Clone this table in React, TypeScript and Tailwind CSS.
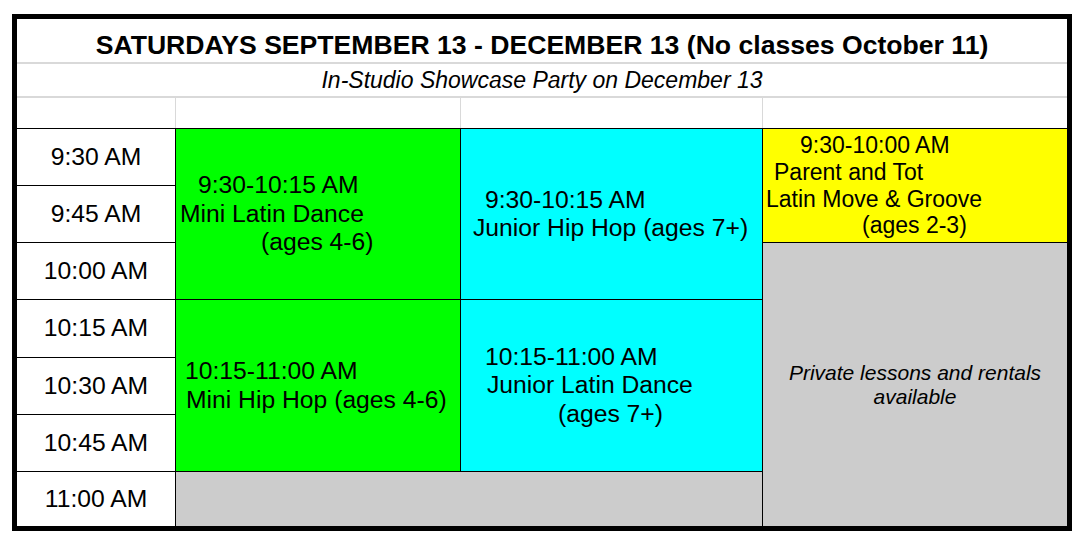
import React from 'react'

type Line = { text: string; indent: string }

const times = [
  { label: '9:30 AM', row: 'row-start-2' },
  { label: '9:45 AM', row: 'row-start-3' },
  { label: '10:00 AM', row: 'row-start-4' },
  { label: '10:15 AM', row: 'row-start-5' },
  { label: '10:30 AM', row: 'row-start-6' },
  { label: '10:45 AM', row: 'row-start-7' },
  { label: '11:00 AM', row: 'row-start-8' },
]

// spreadsheet-style cells: each line keeps its own indent
const ClassCell = ({ lines, className }: { lines: Line[]; className: string }) => (
  <div className={`flex flex-col justify-center border-t border-l border-black ${className}`}>
    {lines.map((line, idx) => (
      <div key={idx} className={`whitespace-pre ${line.indent}`}>
        {line.text}
      </div>
    ))}
  </div>
)

const App = () => {
  return (
    <div className="w-[1086px] h-[546px] bg-white pt-[14px] pl-[12px] text-black font-['Liberation_Sans',Arial,sans-serif]">
      <div className="w-[1060px] border-[5px] border-black bg-white">
        <div className="h-[45px] pt-[11px] border-b-2 border-[#d9d9d9] text-center font-bold text-[26.6px] leading-[30px]">
          SATURDAYS SEPTEMBER 13 - DECEMBER 13 (No classes October 11)
        </div>
        <div className="h-[34px] pt-[3px] border-b-2 border-[#d9d9d9] text-center italic text-[23px] leading-[26px]">
          In-Studio Showcase Party on December 13
        </div>

        <div className="grid grid-cols-[158px_285px_302px_305px] grid-rows-[30px_57px_57px_57px_58px_57px_57px_55px] text-[24.7px] leading-[28.5px]">
          {/* empty header row */}
          <div className="col-start-1 row-start-1" />
          <div className="col-start-2 row-start-1 border-l border-[#d9d9d9]" />
          <div className="col-start-3 row-start-1 border-l border-[#d9d9d9]" />
          <div className="col-start-4 row-start-1 border-l border-[#d9d9d9]" />

          {times.map((t) => (
            <div key={t.label} className={`col-start-1 ${t.row} flex items-center justify-center border-t border-black`}>
              {t.label}
            </div>
          ))}

          <ClassCell
            className="col-start-2 row-start-2 row-span-3 bg-[#00ff00]"
            lines={[
              { text: '9:30-10:15 AM', indent: 'pl-[22px]' },
              { text: 'Mini Latin Dance', indent: 'pl-[4px]' },
              { text: '(ages 4-6)', indent: 'pl-[85px]' },
            ]}
          />
          <ClassCell
            className="col-start-3 row-start-2 row-span-3 bg-[#00ffff]"
            lines={[
              { text: '9:30-10:15 AM', indent: 'pl-[24px]' },
              { text: 'Junior Hip Hop (ages 7+)', indent: 'pl-[12px]' },
            ]}
          />
          <ClassCell
            className="col-start-4 row-start-2 row-span-2 bg-[#ffff00] text-[23px] leading-[26.7px]"
            lines={[
              { text: '9:30-10:00 AM', indent: 'pl-[37px]' },
              { text: 'Parent and Tot', indent: 'pl-[11px]' },
              { text: 'Latin Move & Groove', indent: 'pl-[3px]' },
              { text: '(ages 2-3)', indent: 'pl-[99px]' },
            ]}
          />
          <ClassCell
            className="col-start-2 row-start-5 row-span-3 bg-[#00ff00]"
            lines={[
              { text: '10:15-11:00 AM', indent: 'pl-[9px]' },
              { text: 'Mini Hip Hop (ages 4-6)', indent: 'pl-[10px]' },
            ]}
          />
          <ClassCell
            className="col-start-3 row-start-5 row-span-3 bg-[#00ffff]"
            lines={[
              { text: '10:15-11:00 AM', indent: 'pl-[24px]' },
              { text: 'Junior Latin Dance', indent: 'pl-[26px]' },
              { text: '(ages 7+)', indent: 'pl-[97px]' },
            ]}
          />

          <div className="col-start-2 col-span-2 row-start-8 bg-[#cccccc] border-t border-l border-black" />
          <div className="col-start-4 row-start-4 row-span-5 flex items-center justify-center bg-[#cccccc] border-t border-l border-black">
            <p className="text-center italic text-[21px] leading-[24px]">
              Private lessons and rentals
              <br />
              available
            </p>
          </div>
        </div>
      </div>
    </div>
  )
}

export default App
